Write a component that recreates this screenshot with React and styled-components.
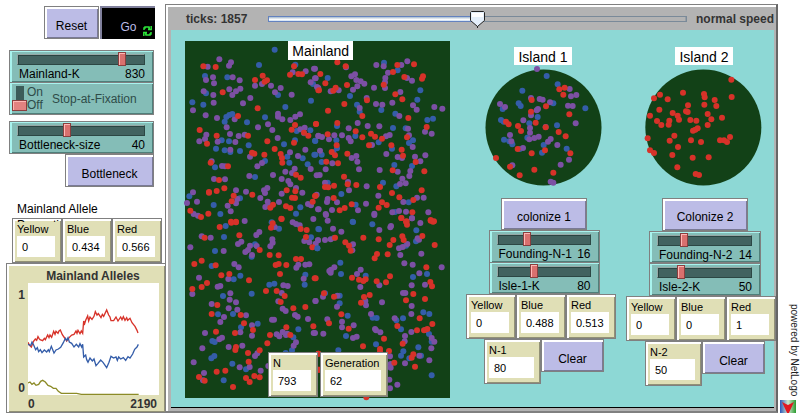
import React, { useId, useState } from "react";
import styled, { createGlobalStyle, css } from "styled-components";

const color = {
  red: "#d73229",
  blue: "#345da9",
  violet: "#7c50a4",
  olive: "#8c8b27",
  ground: "#124117",
  sea: "#8dd8d5",
  button: "#bcbce6",
  slider: "#84bdb7",
  monitor: "#e0dfb6",
};

const GlobalStyle = createGlobalStyle`
  * { box-sizing: border-box; }
  body {
    margin: 0;
    background: #fff;
    color: #000;
    font: 12px/14px "Liberation Sans", Arial, sans-serif;
  }
  button, input { font: inherit; margin: 0; }
`;

/* ---------- page frame ---------- */

const Page = styled.main`
  display: grid;
  grid-template-columns: 165px minmax(0, 1fr) 22px;
  padding-top: 4px;
`;

const Controls = styled.aside`
  display: flex;
  flex-direction: column;
  align-items: flex-start;
  padding-top: 2px;
  position: relative;
  z-index: 1;
`;

const World = styled.section`
  border: 1px solid #808080;
  border-right: 2px solid #666;
  border-bottom: 2px solid #808080;
  background: #b3b3b3;
  padding: 0 2px 3px 5px;
  box-shadow: inset 2px 2px #fff;
  min-width: 0;
`;

const raised = css`
  border: 1px solid #808080;
  box-shadow: inset 2px 2px #fff, inset -1px -1px rgba(0, 0, 0, 0.35);
`;

const Row = styled.div`
  display: flex;
  gap: ${(p) => p.$gap || 0}px;
  margin-left: ${(p) => p.$indent || 0}px;
`;

/* ---------- buttons ---------- */

const Button = styled.button`
  ${raised}
  display: flex;
  align-items: center;
  justify-content: center;
  position: relative;
  width: ${(p) => p.$width}px;
  height: 33px;
  padding: 6px 0 0;
  border-radius: 0;
  background: ${color.button};
  color: #000;
  margin: ${(p) => p.$margin || 0};
`;

const GoButton = styled(Button)`
  background: #000;
  color: ${color.button};
  border: 0;
  border-top: 2px solid #80809c;
  border-left: 2px solid #80809c;
  box-shadow: none;
`;

const ForeverIcon = styled.svg`
  position: absolute;
  right: 3px;
  bottom: 3px;
`;

/* ---------- sliders ---------- */

const SliderBox = styled.label`
  border: 1px solid #808080;
  box-shadow: inset 2px 1px #a9f3ee, inset -1px -1px #4f7f7a;
  display: flex;
  flex-direction: column;
  width: ${(p) => p.$width}px;
  height: 33px;
  padding: 1px 8px 0 7px;
  background: ${color.slider};
  margin-top: ${(p) => p.$top || 0}px;
`;

const Caption = styled.span`
  display: flex;
  justify-content: space-between;
  padding-left: 2px;
  line-height: 14px;
  white-space: nowrap;
`;

const trackStyle = css`
  height: 11px;
  border: 1px solid #96a8a6;
  border-right-color: #2c4744;
  border-bottom-color: #2c4744;
  background: #426360;
  box-shadow: inset 1px 1px #294441;
`;

const thumbStyle = css`
  width: 8px;
  height: 14px;
  margin-top: -3px;
  border: 1px solid #893f3f;
  border-radius: 0;
  background: #d9706e;
  box-shadow: inset 1px 1px #ffb7b5;
`;

const Range = styled.input`
  appearance: none;
  width: 100%;
  height: 15px;
  background: transparent;
  &::-webkit-slider-runnable-track { ${trackStyle} }
  &::-webkit-slider-thumb { appearance: none; ${thumbStyle} }
`;

function Slider({ name, max, initial, width, top }) {
  const [value, setValue] = useState(initial);
  return (
    <SliderBox $width={width} $top={top}>
      <Range type="range" min={0} max={max} value={value} onChange={(e) => setValue(Number(e.target.value))} />
      <Caption>
        <span>{name}</span>
        <span>{value}</span>
      </Caption>
    </SliderBox>
  );
}

/* ---------- switch ---------- */

const SwitchBox = styled.label`
  border: 1px solid #808080;
  box-shadow: inset 2px 1px #a9f3ee, inset -1px -1px #4f7f7a;
  display: flex;
  align-items: center;
  width: 145px;
  height: 33px;
  margin-top: -1px;
  padding-left: 3px;
  background: ${color.slider};
  color: #2f4c49;
`;

const Lever = styled.input`
  appearance: none;
  display: flex;
  flex-direction: column;
  justify-content: ${(p) => (p.checked ? "flex-start" : "flex-end")};
  align-items: center;
  width: 13px;
  height: 25px;
  background: linear-gradient(#3b5c59, #3b5c59) 3px 0 / 8px 22px no-repeat;
  &::after {
    content: "";
    width: 13px;
    height: 9px;
    border: 1px solid #893f3f;
    background: #e28280;
    box-shadow: inset 1px 1px #ffb7b5;
  }
`;

const LeverLabels = styled.span`
  display: grid;
  line-height: 13px;
  margin: 0 9px 0 1px;
`;

/* ---------- monitors ---------- */

const MonitorBox = styled.div`
  ${raised}
  width: ${(p) => p.$width}px;
  height: 45px;
  padding: 3px 6px 0 4px;
  background: ${color.monitor};
  font-size: 11px;
`;

const MonitorLabel = styled.label`
  display: block;
  line-height: 14px;
`;

const Reading = styled.output`
  display: block;
  height: 21px;
  padding: 1px 5px 0;
  background: #fff;
  line-height: 21px;
`;

function Monitor({ name, value, width = 50 }) {
  const id = useId();
  return (
    <MonitorBox $width={width}>
      <MonitorLabel htmlFor={id}>{name}</MonitorLabel>
      <Reading id={id}>{value}</Reading>
    </MonitorBox>
  );
}

const Note = styled.p`
  position: relative;
  z-index: 1;
  width: 96px;
  height: 21px;
  margin: 14px 0 -4px 17px;
  overflow: hidden;
  line-height: 16px;
`;

/* ---------- plot ---------- */

const PlotBox = styled.figure`
  ${raised}
  display: grid;
  grid-template-columns: 21px 131px;
  width: 160px;
  height: 150px;
  margin: 0 0 0 6px;
  padding-top: 5px;
  align-content: start;
  background: ${color.monitor};
  color: #333;
  font-weight: bold;
`;

const PlotTitle = styled.figcaption`
  grid-column: 1 / -1;
  text-align: center;
  padding-left: 20px;
`;

const YAxis = styled.div`
  display: flex;
  flex-direction: column;
  justify-content: space-between;
  align-items: flex-end;
  padding: 5px 3px 0 0;
`;

const XAxis = styled.div`
  grid-column: 2;
  display: flex;
  justify-content: space-between;
  padding: 2px 2px 0 0;
`;

const PlotArea = styled.svg`
  display: block;
  width: 131px;
  height: 112px;
  background: #fff;
`;

const curves = [
  [color.olive, "84,384 90,381 96,388 102,384 108,391 116,388 122,379 128,376 136,381 144,391 152,394 160,400 168,400 175,409 184,415 230,415 244,418 416,418"],
  [color.red, "84,262 88,270 94,276 100,260 106,252 110,256 114,245 117,250 120,254 128,257 133,250 136,254 143,240 147,248 150,240 155,247 161,229 165,238 168,229 174,235 177,228 181,225 187,239 194,249 200,258 208,247 215,240 222,238 228,228 231,235 234,226 240,236 244,228 248,235 251,198 254,206 257,196 263,183 266,198 270,186 276,193 282,184 286,170 291,180 295,176 303,188 307,178 311,184 320,165 326,180 330,186 333,197 341,197 348,186 354,198 362,186 366,194 370,185 375,196 380,188 383,196 390,190 396,203 405,214 411,226 414,234"],
  [color.blue, "84,268 92,272 96,261 101,270 107,284 112,278 116,290 121,284 126,293 133,285 140,291 145,284 148,290 154,274 162,294 168,285 175,282 182,277 190,263 196,250 200,256 204,248 208,261 215,265 222,276 229,268 236,276 240,266 245,276 248,268 251,306 257,300 260,314 264,322 270,309 277,318 282,312 288,332 294,325 302,315 309,322 320,338 327,322 333,304 341,309 348,306 352,316 356,306 362,312 370,308 377,316 384,305 390,309 398,297 404,283 411,276 415,268"],
];

/* ---------- world view ---------- */

const SpeedBar = styled.header`
  display: flex;
  align-items: center;
  height: 25px;
  padding: 2px 0 0 15px;
  color: #333;
  font-weight: bold;
  white-space: nowrap;
`;

const Ticks = styled.span`
  width: 82px;
`;

const SpeedName = styled.label`
  padding-left: 9px;
`;

const thumbArt = encodeURIComponent(
  `<svg xmlns="http://www.w3.org/2000/svg" width="15" height="17"><path d="M1.5.5h12l1 1v8l-7 6-7-6v-8z" fill="#e4effa" stroke="#222"/><path d="M2 2h11v4H2z" fill="#fff"/><path d="M7.5 15v2" stroke="#222"/></svg>`
);

const SpeedRange = styled.input`
  appearance: none;
  flex: 1;
  min-width: 0;
  height: 20px;
  background: transparent;
  &::-webkit-slider-runnable-track {
    height: 6px;
    background:
      linear-gradient(#a3b8cc, #fff 60%, #c8ddf2) 1px 1px / 50% 4px no-repeat,
      linear-gradient(#b3b3b3, #b3b3b3) calc(100% - 1px) 1px / 50% 4px no-repeat,
      linear-gradient(90deg, #6382bf 50%, #7a8a99 50%);
  }
  &::-webkit-slider-thumb {
    appearance: none;
    width: 15px;
    height: 17px;
    margin-top: -5px;
    background: url("data:image/svg+xml,${thumbArt}") no-repeat;
  }
`;

const View = styled.div`
  display: grid;
  grid-template-columns: minmax(0, 1fr) 150px 158px;
  align-items: start;
  padding: 11px 0 9px 14px;
  background: ${color.sea};
  border-bottom: 1px solid #000;
`;

const Mainland = styled.div`
  position: relative;
  margin-right: 16px;
`;

const Field = styled.svg`
  display: block;
  width: 100%;
  height: auto;
  overflow: visible;
`;

const PlaceName = styled.h2`
  margin: 0 0 0 ${(p) => p.$indent || 0}px;
  padding: 2px 4px 0;
  width: max-content;
  height: ${(p) => p.$height || 18}px;
  background: #fff;
  font-size: 14px;
  font-weight: normal;
  line-height: 16px;
`;

const OverField = styled.div`
  position: absolute;
  display: flex;
  gap: 2px;
  ${(p) => (p.$edge === "top" ? "top: 0; left: 39%;" : "bottom: 1px; left: 83px;")}
`;

const Isle = styled.div`
  display: flex;
  flex-direction: column;
  align-items: center;
  padding-top: 6px;
  width: 150px;
  margin-left: ${(p) => p.$shift || 0}px;
`;

const Disc = styled.svg`
  display: block;
  width: 117px;
  height: 117px;
  margin: 4px 0 12px 4px;
  overflow: visible;
`;

const Panel = styled.div`
  display: flex;
  flex-direction: column;
  align-items: center;
  margin-left: ${(p) => p.$indent}px;
  height: ${(p) => p.$height}px;
`;

const FrontRow = styled(Row)`
  position: relative;
  z-index: 1;
`;

/* Positions are in thirds of a screen pixel, one list for each quarter of the mainland. */
const mainlandQuarters = [
  {
    at: "-15 -15",
    red: "70,91 107,93 225,132 248,119 254,137 261,133 342,91 330,116 355,114 366,115 128,169 233,217 174,240 59,282 110,299 81,323 204,299 262,316 216,350 223,353 253,356 284,339 302,354 306,366 307,380 345,267 335,281 342,320 372,290 385,299 408,264 92,380 144,391 117,432 87,470 110,465 133,457 87,468 161,479 155,496 217,476 348,416 362,425 320,463 346,466 336,485 345,486 405,480 398,497 31,524 63,543 85,533 279,506 271,515 318,511 331,516 304,548 153,557 168,557 415,163",
    blue: "284,41 237,87 75,120 142,124 37,199 70,206 78,172 294,177 316,213 393,194 346,86 399,144 148,237 157,234 139,243 134,257 255,244 201,259 125,313 147,316 206,328 108,338 134,343 151,348 180,345 312,325 345,313 350,285 391,283 405,314 322,362 328,380 368,367 403,356 255,375 383,385 105,394 225,423 28,481 101,507 121,534 180,487 361,514 348,533 372,292",
    violet: "118,70 153,79 147,89 83,92 99,124 78,132 102,142 158,124 179,133 181,158 148,160 168,166 157,177 100,177 71,166 101,200 39,223 77,238 111,246 189,202 211,186 225,149 246,144 273,149 302,156 285,169 335,176 377,106 402,98 338,109 392,139 405,127 411,153 164,250 140,274 294,233 294,242 307,250 331,252 346,242 360,235 264,265 234,274 277,282 293,306 150,294 176,300 194,296 79,296 75,309 58,316 113,317 166,318 151,341 210,362 330,349 354,360 376,341 95,376 126,390 135,391 102,429 135,430 208,420 232,391 246,381 316,407 336,411 344,398 392,399 279,417 305,429 325,435 331,445 262,456 252,463 255,471 241,486 198,467 168,463 348,456 367,470 305,473 297,498 263,497 266,509 256,513 39,469 51,497 21,501 143,509 168,502 152,526 172,489 41,534 54,539 384,504 393,508 410,476 374,275 361,280 415,299 410,418 414,520",
  },
  {
    at: "390 -15",
    red: "67,79 92,91 16,114 31,142 62,155 96,147 55,164 12,163 247,87 297,85 234,108 268,123 324,121 321,128 206,146 156,193 88,204 241,175 262,190 39,224 142,240 280,246 3,264 67,261 38,295 122,286 142,304 168,293 180,302 201,308 65,328 162,328 229,328 276,304 335,273 260,341 264,359 50,348 60,358 34,377 69,382 97,353 302,378 328,406 233,403 87,422 98,445 124,447 30,453 40,454 57,449 195,453 231,471 320,463 253,484 295,492 56,486 110,505 89,516 74,523 201,499 215,507 191,515 292,529 259,546 2,479 275,556 347,552 357,556",
    blue: "207,80 248,103 38,126 316,163 307,191 105,180 126,206 134,227 199,222 241,233 337,252 354,248 234,276 272,277 66,270 121,300 64,313 191,319 231,338 282,321 294,313 291,390 238,387 66,337 55,349 20,356 20,378 204,440 244,451 79,474 38,440 122,506 240,528 281,499 1,315 1,356 113,557",
    violet: "184,87 277,76 259,87 206,91 219,110 211,126 210,139 210,156 291,134 276,126 177,155 120,115 109,121 124,132 137,136 148,143 127,151 114,161 2,127 10,156 47,166 71,163 93,94 155,186 183,204 202,206 232,200 256,168 294,208 305,221 358,213 382,218 253,240 134,216 128,261 158,270 193,271 101,277 279,278 350,293 330,287 10,300 21,303 42,310 58,298 81,298 101,306 107,316 171,327 224,297 213,301 282,298 293,333 214,354 248,363 261,366 300,362 331,358 316,376 286,405 248,407 194,402 15,344 52,382 32,400 14,417 110,366 124,360 127,377 132,400 262,428 272,442 255,444 283,420 155,451 30,440 102,463 99,438 190,479 153,503 129,523 178,533 36,498 38,489 66,499 51,522 11,520 32,534 265,498 306,485 326,485 232,529 273,527 252,525 340,529 291,547 0,98",
  },
  {
    at: "-15 522",
    red: "119,36 154,23 168,22 178,61 74,68 239,105 269,120 296,121 305,12 278,25 273,38 362,42 380,45 378,66 397,97 348,132 363,132 43,147 65,137 107,151 124,181 148,177 207,196 287,150 296,147 319,150 300,177 404,190 65,216 81,204 37,222 290,228 258,228 314,243 302,261 112,270 95,297 182,300 340,280 376,276 400,334 192,325 219,345 108,350 165,354 319,337 270,360 331,360 262,385 168,396 166,405 204,414 239,406 206,440 110,470 136,467 57,486 74,497 198,489 209,501 223,483 239,487 159,516 415,416 416,464",
    blue: "137,33 132,66 105,108 225,88 215,125 297,41 393,67 412,100 95,153 181,182 161,193 376,179 374,209 268,209 283,206 129,243 215,236 114,298 159,297 183,337 233,326 355,343 340,367 97,378 104,381 103,423 94,430 157,446 198,463 131,496 317,414 336,406 275,22 415,42",
    violet: "194,18 238,51 229,60 65,64 92,68 31,97 131,108 184,80 174,87 210,92 230,93 204,105 196,111 216,120 277,73 278,83 271,94 284,36 338,22 348,27 359,31 400,12 373,78 388,82 407,86 355,149 349,158 376,149 388,148 163,147 176,157 57,188 145,192 121,213 113,215 37,237 151,235 149,254 168,262 146,280 95,267 172,284 198,301 132,306 121,321 310,211 323,213 371,191 305,234 295,259 308,281 317,288 345,300 353,305 384,312 406,258 282,314 276,314 216,331 216,362 181,352 75,354 126,368 118,373 308,351 318,360 290,358 298,364 401,354 348,382 341,392 146,396 187,392 67,400 225,423 41,442 179,457 209,456 242,467 72,474 69,496 232,415 322,356 414,76 265,453",
  },
  {
    at: "390 522",
    red: "259,9 273,20 276,29 347,17 354,20 191,73 145,68 235,75 224,90 262,64 266,75 322,63 91,82 102,92 107,107 359,90 186,117 179,130 218,118 334,157 225,184 213,202 346,201 351,214 111,188 132,194 145,198 152,193 185,199 27,235 57,245 147,246 164,240 138,263 295,237 273,256 330,252 79,298 314,310 352,327 101,341 42,325 306,346 327,346 337,342 247,333 207,371 263,386 144,394 195,402 195,410 222,408 295,418 290,428 238,443 300,455 10,416 154,547 2,190 60,68 12,464",
    blue: "114,21 172,28 12,43 304,46 303,79 273,92 57,69 7,100 76,143 78,177 294,186 336,177 152,182 74,242 74,265 325,292 343,297 98,302 173,308 185,309 264,310 244,316 258,343 342,357 350,380 93,363 183,388 70,406 310,397 265,409 258,422 283,430 318,422 350,481 30,235",
    violet: "38,17 54,41 79,50 228,33 226,37 193,45 291,10 316,24 312,74 308,70 277,87 263,96 252,100 256,120 319,116 268,145 293,149 380,157 313,175 114,88 112,106 30,75 47,73 9,76 58,157 48,164 43,168 137,164 126,177 47,173 193,211 136,216 290,211 330,209 271,234 264,234 201,262 151,258 153,271 24,245 66,275 290,273 289,297 168,297 239,310 37,313 81,320 81,337 116,331 180,342 183,346 196,352 25,356 125,365 114,369 289,351 270,363 269,379 331,345 350,369 358,380 349,400 343,436 313,422 270,445 225,424 227,447 227,458 223,494 247,509 225,520 2,258 67,242 0,354 33,0 178,0",
  },
];

const isleOne = {
  red: "170,120 168,155 213,139 253,88 269,83 265,104 283,163 93,185 101,193 129,198 138,213 182,188 212,202 251,216 272,229 128,267 170,280 210,271 286,280 63,294 105,320 178,329 235,338 134,346",
  blue: "215,48 248,73 142,92 235,130 131,130 137,138 83,147 188,171 163,190 246,196 331,145 78,180 86,185 87,239 103,244 112,253 157,233 134,267 206,255 201,278 275,266",
  violet: "186,27 168,114 194,117 203,119 225,127 75,132 90,141 284,87 288,109 304,105 279,137 293,138 189,147 185,151 168,166 145,181 165,204 165,218 105,225 163,238 178,234 191,230 227,237 219,245 247,255 144,264 302,190 282,299 257,314 112,316 227,365 235,368 109,244 212,201",
};

const isleTwo = {
  red: "784,238 785,290 639,277 702,281 704,291 734,299 703,313 739,317 570,283 552,294 593,297 568,328 540,346 561,362 574,374 596,373 598,361 608,338 623,346 627,358 654,315 648,333 653,335 661,359 679,361 713,341 724,357 713,374 756,352 683,384 676,388 669,391 613,406 599,421 624,440 607,464 663,420 693,425 750,420 762,420 771,425 780,410 533,414 540,450 552,458 668,472 716,471 622,501 677,521 687,524",
};

const toPoints = (list) => list.split(" ").map((pair) => pair.split(","));

function Turtles({ groups, at = "0 0" }) {
  return (
    <g transform={`translate(${at})`}>
      {["blue", "violet", "red"].map((name) => (
        <g key={name} fill={color[name]}>
          {groups[name] &&
            toPoints(groups[name]).map(([x, y], i) => <circle key={i} cx={x} cy={y} r="9" />)}
        </g>
      ))}
    </g>
  );
}

const Credit = styled.a`
  display: flex;
  flex-direction: column;
  justify-content: flex-end;
  padding-left: 2px;
  gap: 4px;
  color: #222;
  text-decoration: none;
  font-size: 10px;
  margin-bottom: -3px;
`;

const Sideways = styled.span`
  writing-mode: vertical-rl;
  line-height: 12px;
`;

export default function App() {
  const [stopAtFixation, setStop] = useState(false);
  const [speed, setSpeed] = useState(50);
  return (
    <>
      <GlobalStyle />
      <Page>
        <Controls>
          <Row $indent={44} $gap={1}>
            <Button $width={55}>Reset</Button>
            <GoButton $width={55}>
              Go
              <ForeverIcon width="9" height="10" viewBox="0 0 9 10" aria-hidden="true">
                <path
                  d="M1 4V2h1V1h4v1h1M8.2 0v3.6H5M8 6v2H7v1H3V8H2M.8 10V6.4H4"
                  fill="none"
                  stroke="#2de53a"
                  strokeWidth="1.5"
                />
              </ForeverIcon>
            </GoButton>
          </Row>
          <Row $indent={9}>
            <Slider name="Mainland-K" max={976} initial={830} width={145} top={11} />
          </Row>
          <Row $indent={9}>
            <SwitchBox>
              <Lever type="checkbox" checked={stopAtFixation} onChange={(e) => setStop(e.target.checked)} />
              <LeverLabels>
                <span>On</span>
                <span>Off</span>
              </LeverLabels>
              Stop-at-Fixation
            </SwitchBox>
          </Row>
          <Row $indent={9}>
            <Slider name="Bottleneck-size" max={104} initial={40} width={145} top={6} />
          </Row>
          <Button $width={89} $margin="0 0 0 65px">Bottleneck</Button>
          <Note>Mainland Allele Proportions</Note>
          <Row $indent={12}>
            <Monitor name="Yellow" value="0" />
            <Monitor name="Blue" value="0.434" />
            <Monitor name="Red" value="0.566" />
          </Row>
          <PlotBox>
            <PlotTitle>Mainland Alleles</PlotTitle>
            <YAxis>
              <span>1</span>
              <span>0</span>
            </YAxis>
            <PlotArea viewBox="84 84 393 336" preserveAspectRatio="none" role="img" aria-label="Allele frequencies over time">
              {curves.map(([stroke, points]) => (
                <polyline key={stroke} points={points} fill="none" stroke={stroke} strokeWidth="4" />
              ))}
            </PlotArea>
            <XAxis>
              <span>0</span>
              <span>2190</span>
            </XAxis>
          </PlotBox>
        </Controls>

        <World>
          <SpeedBar>
            <Ticks>ticks: 1857</Ticks>
            <SpeedRange id="speed" type="range" value={speed} onChange={(e) => setSpeed(Number(e.target.value))} />
            <SpeedName htmlFor="speed">normal speed</SpeedName>
          </SpeedBar>
          <View>
            <Mainland>
              <Field viewBox="0 0 795 1071" role="img" aria-label="Mainland population">
                <rect width="795" height="1071" fill={color.ground} />
                {mainlandQuarters.map((q) => (
                  <Turtles key={q.at} groups={q} at={q.at} />
                ))}
              </Field>
              <OverField $edge="top">
                <PlaceName $height={19}>Mainland</PlaceName>
              </OverField>
              <OverField $edge="bottom">
                <Monitor name="N" value="793" />
                <Monitor name="Generation" value="62" width={68} />
              </OverField>
            </Mainland>

            <Isle>
              <PlaceName $indent={4}>Island 1</PlaceName>
              <Disc viewBox="30 27 351 351" role="img" aria-label="Island 1 population">
                <circle cx="205.5" cy="202.5" r="174" fill={color.ground} />
                <Turtles groups={isleOne} />
              </Disc>
              <Panel $indent={6} $height={96}>
                <Button $width={86}>colonize 1</Button>
                <Slider name="Founding-N-1" max={52} initial={16} width={111} />
                <Slider name="Isle-1-K" max={207} initial={80} width={111} top={-1} />
              </Panel>
              <FrontRow>
                <Monitor name="Yellow" value="0" />
                <Monitor name="Blue" value="0.488" />
                <Monitor name="Red" value="0.513" />
              </FrontRow>
              <Row $indent={6}>
                <Monitor name="N-1" value="80" width={57} />
                <Button $width={63}>Clear</Button>
              </Row>
            </Isle>

            <Isle $shift={10}>
              <PlaceName $indent={6}>Island 2</PlaceName>
              <Disc viewBox="525 206 351 351" role="img" aria-label="Island 2 population">
                <circle cx="700" cy="381.5" r="174" fill={color.ground} />
                <Turtles groups={isleTwo} />
              </Disc>
              <Panel $indent={8} $height={98}>
                <Button $width={86}>Colonize 2</Button>
                <Slider name="Founding-N-2" max={54} initial={14} width={112} />
                <Slider name="Isle-2-K" max={222} initial={50} width={112} />
              </Panel>
              <FrontRow>
                <Monitor name="Yellow" value="0" />
                <Monitor name="Blue" value="0" />
                <Monitor name="Red" value="1" />
              </FrontRow>
              <Row $indent={8}>
                <Monitor name="N-2" value="50" width={57} />
                <Button $width={63}>Clear</Button>
              </Row>
            </Isle>
          </View>
        </World>

        <Credit href="#netlogo">
          <Sideways>powered by NetLogo</Sideways>
          <svg width="16" height="16" viewBox="0 0 16 16" aria-hidden="true">
            <defs>
              <linearGradient id="logo">
                <stop offset="0" stopColor="#2b56b8" />
                <stop offset="0.5" stopColor="#cfe6cf" />
                <stop offset="1" stopColor="#279a2c" />
              </linearGradient>
            </defs>
            <rect width="16" height="16" fill="url(#logo)" />
            <path d="M2 2l6 3 6-3-6 13z" fill="#e01822" />
          </svg>
        </Credit>
      </Page>
    </>
  );
}
